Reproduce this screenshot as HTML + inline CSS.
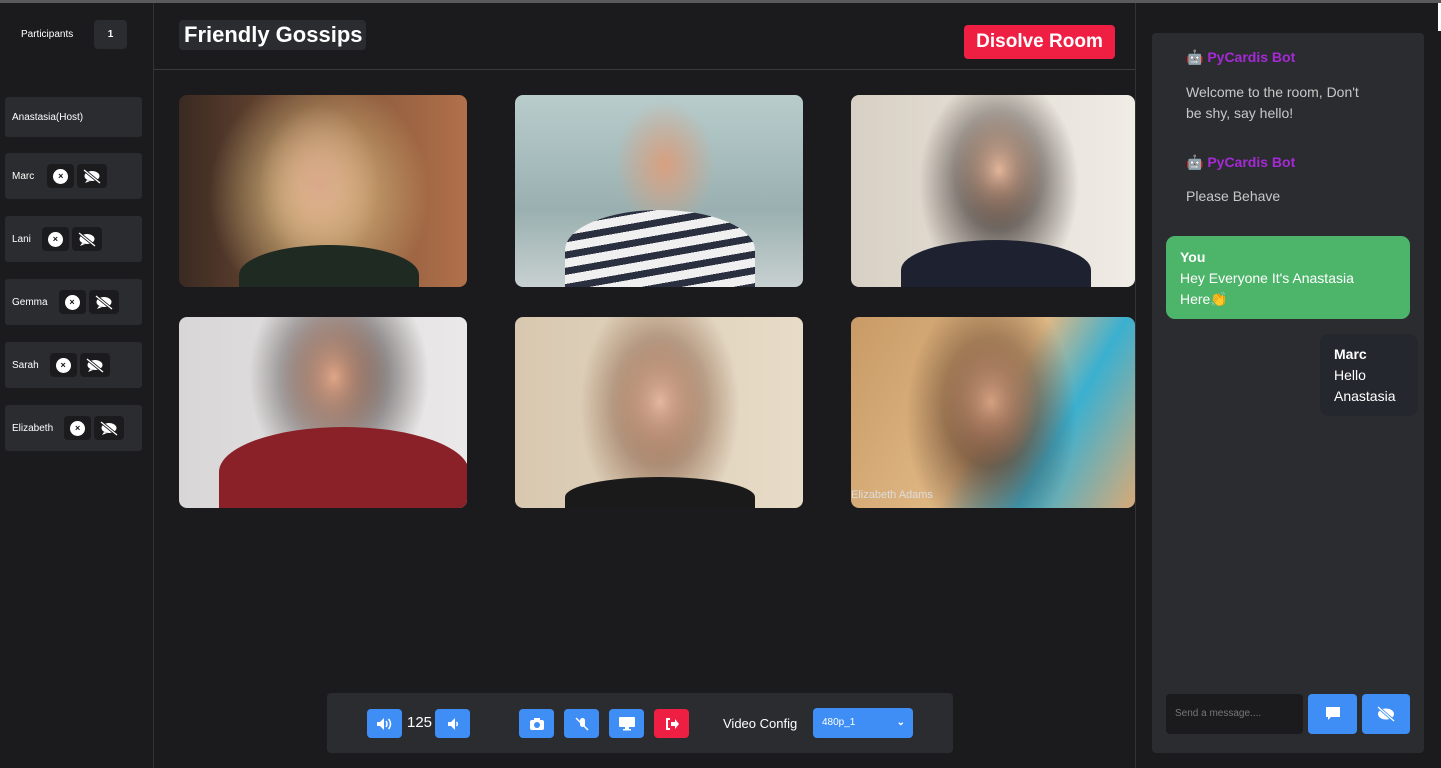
<!DOCTYPE html>
<html><head><meta charset="utf-8"><style>
*{box-sizing:border-box;margin:0;padding:0}
body{width:1441px;height:768px;background:#1b1b1d;font-family:"Liberation Sans",sans-serif;color:#fff;position:relative;overflow:hidden}
.a{position:absolute}
.row{position:absolute;left:5px;width:137px;height:46px;background:#2b2c2f;border-radius:3px;font-size:10px;display:flex;align-items:center;padding-left:7px}
.ib{width:27px;height:24px;background:#1b1b1d;border-radius:4px;display:flex;align-items:center;justify-content:center;margin-left:3px}
.ib .c{width:15px;height:15px;border-radius:50%;background:#fff;color:#111;font-size:9px;font-weight:bold;text-align:center;line-height:15px}
.tile{position:absolute;border-radius:8px;overflow:hidden}
.btn{position:absolute;top:709px;width:35px;height:29px;background:#3f8ef5;border-radius:4px;display:flex;align-items:center;justify-content:center}
</style></head><body>
<svg width="0" height="0" style="position:absolute"><defs><g id="co"><ellipse cx="9" cy="7" rx="7.5" ry="5" fill="#fff"/><path d="M4 11l-2 3 5-2z" fill="#fff"/><path d="M1 1L17 14" stroke="#1b1b1d" stroke-width="3"/><path d="M1 1L17 14" stroke="#fff" stroke-width="1.3"/></g></defs></svg>
<div class="a" style="left:0;top:0;width:1441px;height:3px;background:#5a5a5c"></div>
<div class="a" style="left:153px;top:3px;width:1px;height:765px;background:#333"></div>
<div class="a" style="left:1135px;top:3px;width:1px;height:765px;background:#333"></div>
<div class="a" style="left:154px;top:69px;width:981px;height:1px;background:#3a3a3c"></div>
<div class="a" style="left:21px;top:29px;font-size:10px">Participants</div>
<div class="a" style="left:94px;top:20px;width:33px;height:29px;background:#2b2c2f;border-radius:4px;font-size:10px;font-weight:bold;text-align:center;line-height:29px">1</div>
<div class="row" style="top:97px;height:40px">Anastasia(Host)</div>
<div class="row" style="top:153px">Marc<span style="width:10px"></span><div class="ib"><div class="c">×</div></div><div class="ib" style="width:30px"><svg width="18" height="15"><use href="#co"/></svg></div></div>
<div class="row" style="top:216px">Lani<span style="width:8px"></span><div class="ib"><div class="c">×</div></div><div class="ib" style="width:30px"><svg width="18" height="15"><use href="#co"/></svg></div></div>
<div class="row" style="top:279px">Gemma<span style="width:8px"></span><div class="ib"><div class="c">×</div></div><div class="ib" style="width:30px"><svg width="18" height="15"><use href="#co"/></svg></div></div>
<div class="row" style="top:342px">Sarah<span style="width:8px"></span><div class="ib"><div class="c">×</div></div><div class="ib" style="width:30px"><svg width="18" height="15"><use href="#co"/></svg></div></div>
<div class="row" style="top:405px">Elizabeth<span style="width:8px"></span><div class="ib"><div class="c">×</div></div><div class="ib" style="width:30px"><svg width="18" height="15"><use href="#co"/></svg></div></div>
<div class="a" style="left:179px;top:20px;width:187px;height:30px;background:#2b2c2f;border-radius:4px;font-size:22px;font-weight:bold;padding-left:5px;line-height:30px">Friendly Gossips</div>
<div class="a" style="left:964px;top:25px;width:151px;height:34px;background:#ef1f44;border-radius:4px;font-size:19px;font-weight:bold;text-align:center;line-height:34px">Disolve Room</div>
<div class="tile" style="left:179px;top:95px;width:288px;height:192px;background:radial-gradient(ellipse 60px 80px at 140px 90px,#d9a88b,transparent),radial-gradient(ellipse 110px 120px at 140px 100px,#e6c98a,transparent),linear-gradient(90deg,#3a2a22,#8a5a3c 60%,#b0704a);"><div class="a" style="left:60px;top:150px;width:180px;height:60px;background:#1f2a22;border-radius:50% 50% 0 0"></div></div>
<div class="tile" style="left:515px;top:95px;width:288px;height:192px;background:radial-gradient(ellipse 50px 65px at 150px 70px,#d8a080,transparent),linear-gradient(#b8cccc,#9ab0b0 60%,#c8d0d0);"><div class="a" style="left:50px;top:115px;width:190px;height:80px;background:repeating-linear-gradient(170deg,#f0f0f0 0 9px,#2a3040 9px 16px);border-radius:50% 50% 0 0"></div></div>
<div class="tile" style="left:851px;top:95px;width:284px;height:192px;background:radial-gradient(ellipse 45px 60px at 148px 75px,#e2b59a,transparent),radial-gradient(ellipse 80px 110px at 148px 90px,#1e1512,transparent),linear-gradient(90deg,#d8d0c4,#f0ece6);"><div class="a" style="left:50px;top:145px;width:190px;height:60px;background:#1e2230;border-radius:50% 50% 0 0"></div></div>
<div class="tile" style="left:179px;top:317px;width:288px;height:191px;background:radial-gradient(ellipse 55px 75px at 155px 60px,#e0a688,transparent),radial-gradient(ellipse 90px 110px at 160px 60px,#2a2224,transparent),linear-gradient(90deg,#d8d6d6,#eae8e8);"><div class="a" style="left:40px;top:110px;width:250px;height:90px;background:#8a2028;border-radius:50% 50% 0 0"></div></div>
<div class="tile" style="left:515px;top:317px;width:288px;height:191px;background:radial-gradient(ellipse 48px 65px at 145px 85px,#e4b8a0,transparent),radial-gradient(ellipse 80px 120px at 145px 90px,#7a4a30,transparent),linear-gradient(90deg,#d8c8b0,#e8dcc8);"><div class="a" style="left:50px;top:160px;width:190px;height:40px;background:#1a1a1a;border-radius:50% 50% 0 0"></div></div>
<div class="tile" style="left:851px;top:317px;width:284px;height:191px;background:radial-gradient(ellipse 48px 65px at 140px 85px,#d4a080,transparent),radial-gradient(ellipse 85px 130px at 140px 100px,#4a2a1c,transparent),linear-gradient(120deg,#c89a66,#e0b884 50%,#3ab0d0 70%,#d8aa78);"><div class="a" style="left:0;top:172px;font-size:11px;color:#ddd">Elizabeth Adams</div></div>
<div class="a" style="left:327px;top:693px;width:626px;height:60px;background:#2b2c2f;border-radius:4px"></div>
<div class="btn" style="left:367px"><svg width="18" height="14"><path d="M1 5h3l4-4v12l-4-4H1z" fill="#fff"/><path d="M10 4q2 3 0 6M12.5 2q4 5 0 10" stroke="#fff" stroke-width="1.5" fill="none"/></svg></div>
<div class="a" style="left:407px;top:714px;font-size:15px">125</div>
<div class="btn" style="left:435px"><svg width="14" height="14"><path d="M2 5h3l4-4v12l-4-4H2z" fill="#fff"/><path d="M10.5 5q1.5 2 0 4" stroke="#fff" stroke-width="1.5" fill="none"/></svg></div>
<div class="btn" style="left:519px"><svg width="16" height="14"><rect x="1" y="3" width="14" height="10" rx="2" fill="#fff"/><rect x="5" y="1" width="6" height="3" fill="#fff"/><circle cx="8" cy="8" r="3" fill="#3f8ef5"/></svg></div>
<div class="btn" style="left:564px"><svg width="16" height="16"><rect x="6" y="2" width="5" height="9" rx="2.5" fill="#fff"/><path d="M2 2 L14 14" stroke="#fff" stroke-width="1.5"/></svg></div>
<div class="btn" style="left:609px"><svg width="18" height="15"><rect x="1" y="1" width="16" height="10" rx="1" fill="#fff"/><rect x="7" y="11" width="4" height="2" fill="#fff"/><rect x="5" y="13" width="8" height="1.5" fill="#fff"/></svg></div>
<div class="btn" style="left:654px;background:#ef1f44"><svg width="16" height="14"><path d="M6 2H3v10h3" stroke="#fff" stroke-width="2" fill="none"/><path d="M7 5h4V2l4 5-4 5V9H7z" fill="#fff"/></svg></div>
<div class="a" style="left:723px;top:716px;font-size:13px">Video Config</div>
<div class="a" style="left:813px;top:708px;width:100px;height:30px;background:#3f8ef5;border-radius:4px;font-size:10px;padding-left:9px;line-height:30px">480p_1<span style="position:absolute;right:8px;font-weight:bold">⌄</span></div>
<div class="a" style="left:1152px;top:33px;width:272px;height:720px;background:#2b2c2f;border-radius:4px"></div>
<div class="a" style="left:1438px;top:3px;width:3px;height:28px;background:#fff"></div>
<div class="a" style="left:1186px;top:49px;font-size:14px;font-weight:bold;color:#a52ad6">🤖 PyCardis Bot</div>
<div class="a" style="left:1186px;top:82px;width:190px;font-size:14px;line-height:21px;color:#c8c8c8">Welcome to the room, Don't<br>be shy, say hello!</div>
<div class="a" style="left:1186px;top:154px;font-size:14px;font-weight:bold;color:#a52ad6">🤖 PyCardis Bot</div>
<div class="a" style="left:1186px;top:188px;font-size:14px;color:#c8c8c8">Please Behave</div>
<div class="a" style="left:1166px;top:236px;width:244px;height:83px;background:#4db56a;border-radius:9px;padding:11px 14px;font-size:14px;line-height:21px"><b>You</b><br>Hey Everyone It's Anastasia<br>Here👏</div>
<div class="a" style="left:1320px;top:334px;width:98px;height:82px;background:#24282e;border-radius:8px;padding:10px 14px;font-size:14px;line-height:21px"><b>Marc</b><br>Hello<br>Anastasia</div>
<div class="a" style="left:1166px;top:694px;width:137px;height:40px;background:#1b1b1d;border-radius:4px;font-size:10px;color:#777;padding-left:9px;line-height:40px">Send a message....</div>
<div class="a" style="left:1308px;top:694px;width:49px;height:40px;background:#3f8ef5;border-radius:4px;display:flex;align-items:center;justify-content:center"><svg width="16" height="16"><path d="M1 1h14v10H6l-3 3v-3H1z" fill="#fff"/></svg></div>
<div class="a" style="left:1362px;top:694px;width:48px;height:40px;background:#3f8ef5;border-radius:4px;display:flex;align-items:center;justify-content:center"><svg width="20" height="16"><ellipse cx="10" cy="8" rx="8" ry="5.5" fill="#fff"/><path d="M2 1L18 15" stroke="#3f8ef5" stroke-width="3"/><path d="M2 1L18 15" stroke="#fff" stroke-width="1.3"/></svg></div>
</body></html>
